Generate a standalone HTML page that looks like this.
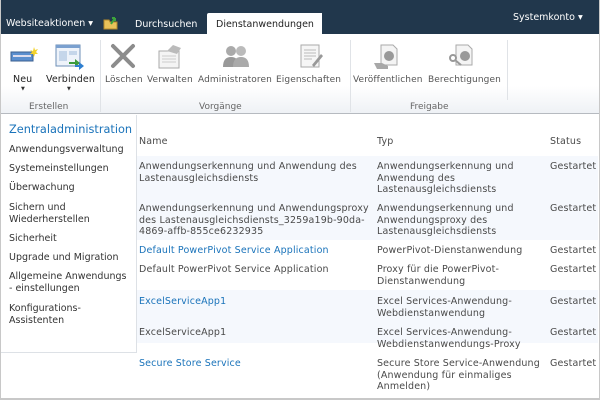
<!DOCTYPE html>
<html><head><meta charset="utf-8"><style>
*{margin:0;padding:0;box-sizing:border-box}
body{width:600px;height:400px;overflow:hidden;background:#fff;font-family:"DejaVu Sans",Verdana,sans-serif;font-size:9.5px;color:#4a4a4a;position:relative}
.a{position:absolute;white-space:nowrap}
.top{position:absolute;left:0;top:0;width:600px;height:34px;background:#21374c}
.w{color:#fff;font-size:9.5px}
.rib{position:absolute;left:0;top:34px;width:600px;height:80px;background:linear-gradient(#fff 0,#fff 52px,#eef1f5 80px);border-bottom:1px solid #b6bac0}
.sep{position:absolute;top:40px;width:1px;height:72px;background:#e0e3e7}
.lbl{font-size:9px;color:#555;letter-spacing:0.1px}
.gl{font-size:9px;color:#666}
.nav{position:absolute;left:0;top:115px;width:137px;height:238px;border-right:1px solid #dde1e6;border-bottom:1px solid #dde1e6;background:#fff}
.ni{position:absolute;left:9px;font-size:9.5px;color:#333;line-height:12px;white-space:nowrap}
.t{position:absolute;line-height:11.5px;white-space:nowrap;letter-spacing:0.15px}
.lk{color:#1a73ba}
.band{position:absolute;left:137px;width:461px;background:#f5f8fd}
</style></head><body>
<div class="top"></div>
<div class="a w" style="left:6px;top:18px">Websiteaktionen ▾</div>
<svg class="a" style="left:103px;top:16px" width="16" height="14"><path d="M1 4h5l1 2h7v7H1z" fill="#e9c25a" stroke="#b58a2a"/><path d="M8 8l4-6M12 2l-3 0M12 2l0 3" stroke="#3ca33c" stroke-width="2"/></svg>
<div class="a w" style="left:135px;top:19px">Durchsuchen</div>
<div class="a" style="left:207px;top:13px;width:115px;height:22px;background:#fff;border-top-left-radius:2px"></div>
<div class="a" style="left:216px;top:19px;color:#222;font-size:9.5px">Dienstanwendungen</div>
<div class="a w" style="left:513px;top:12px">Systemkonto ▾</div>
<div class="rib"></div>
<div class="sep" style="left:100px"></div><div class="sep" style="left:350px"></div><div class="sep" style="left:507px;height:60px"></div>
<svg class="a" style="left:10px;top:46px" width="28" height="18"><rect x="1" y="6" width="22" height="9" fill="#5b8fcf" stroke="#3b5f8f"/><rect x="3" y="9" width="18" height="2" fill="#dde"/><path d="M24 1l1 3 3-1-2 3 2 2-3 0-1 3-1-3-3 0 2-2-2-2 3 1z" fill="#f3d22b"/></svg>
<svg class="a" style="left:55px;top:44px" width="30" height="28"><rect x="1" y="1" width="24" height="21" fill="#eef3fa" stroke="#6d8fb7"/><rect x="1" y="1" width="24" height="3" fill="#7aa0cf"/><rect x="4" y="7" width="8" height="10" fill="#c5d6ea"/><rect x="14" y="7" width="8" height="4" fill="#c5d6ea"/><path d="M14 18h6v-3l5 4-5 4v-3h-6z" fill="#3d9b3d"/><path d="M20 21h4v-3l5 4-5 4v-3h-4z" fill="#2f7fd0"/></svg>
<svg class="a" style="left:110px;top:43px" width="26" height="26"><path d="M3 3L23 23M23 3L3 23" stroke="#8c8c8c" stroke-width="4" stroke-linecap="round"/></svg>
<svg class="a" style="left:157px;top:43px" width="26" height="26"><rect x="2" y="8" width="20" height="17" fill="#f4f4f4" stroke="#aaa"/><path d="M5 13h14M5 16h14M5 19h14" stroke="#ccc"/><path d="M10 8l6-6 8 3-4 6z" fill="#bbb"/></svg>
<svg class="a" style="left:222px;top:43px" width="28" height="26"><circle cx="9" cy="8" r="5" fill="#aaa"/><path d="M1 24q0-10 8-10t8 10z" fill="#999"/><circle cx="19" cy="8" r="5" fill="#bbb"/><path d="M11 24q0-10 8-10t8 10z" fill="#aaa"/></svg>
<svg class="a" style="left:298px;top:43px" width="26" height="26"><rect x="3" y="2" width="18" height="22" fill="#f6f6f6" stroke="#aaa"/><path d="M6 7h12M6 10h12M6 13h12M6 16h8" stroke="#bbb"/><path d="M14 22l9-11 2 2-9 11z" fill="#999"/></svg>
<svg class="a" style="left:373px;top:43px" width="28" height="28"><path d="M8 2h12l4 4v16H8z" fill="#f4f4f4" stroke="#aaa"/><circle cx="16" cy="13" r="5" fill="#999"/><path d="M1 20h8l6 3v3H4z" fill="#a8a8a8"/></svg>
<svg class="a" style="left:448px;top:43px" width="28" height="28"><path d="M8 2h12l4 4v16H8z" fill="#f4f4f4" stroke="#aaa"/><circle cx="17" cy="13" r="5" fill="#999"/><circle cx="5" cy="15" r="3" fill="none" stroke="#999" stroke-width="2"/><path d="M7 17l6 5" stroke="#999" stroke-width="2"/></svg>
<div class="a lbl" style="left:13px;top:74px;color:#222;font-size:9.5px">Neu</div>
<div class="a" style="left:21px;top:86px;font-size:5px;color:#333">▼</div>
<div class="a lbl" style="left:46px;top:74px;color:#222;font-size:9.5px">Verbinden</div>
<div class="a" style="left:67px;top:86px;font-size:5px;color:#333">▼</div>
<div class="a lbl" style="left:105px;top:75px">Löschen</div>
<div class="a lbl" style="left:147px;top:75px">Verwalten</div>
<div class="a lbl" style="left:198px;top:75px">Administratoren</div>
<div class="a lbl" style="left:276px;top:75px">Eigenschaften</div>
<div class="a lbl" style="left:353px;top:75px">Veröffentlichen</div>
<div class="a lbl" style="left:428px;top:75px">Berechtigungen</div>
<div class="a gl" style="left:29px;top:102px">Erstellen</div>
<div class="a gl" style="left:199px;top:102px">Vorgänge</div>
<div class="a gl" style="left:410px;top:102px">Freigabe</div>
<div class="nav"></div>
<div class="a" style="left:9px;top:123px;font-size:11.3px;color:#1a73ba">Zentraladministration</div>
<div class="ni" style="top:144px">Anwendungsverwaltung</div>
<div class="ni" style="top:163px">Systemeinstellungen</div>
<div class="ni" style="top:182px">Überwachung</div>
<div class="ni" style="top:202px">Sichern und<br>Wiederherstellen</div>
<div class="ni" style="top:233px">Sicherheit</div>
<div class="ni" style="top:252px">Upgrade und Migration</div>
<div class="ni" style="top:271px">Allgemeine Anwendungs<br>- einstellungen</div>
<div class="ni" style="top:303px">Konfigurations-<br>Assistenten</div>
<div class="band" style="top:156px;height:84px"></div>
<div class="band" style="top:290px;height:53px"></div>
<div class="t" style="left:139px;top:136px">Name</div>
<div class="t" style="left:377px;top:136px">Typ</div>
<div class="t" style="left:550px;top:136px">Status</div>
<div class="t" style="left:139px;top:161px">Anwendungserkennung und Anwendung des<br>Lastenausgleichsdiensts</div>
<div class="t" style="left:377px;top:161px">Anwendungserkennung und<br>Anwendung des<br>Lastenausgleichsdiensts</div>
<div class="t" style="left:550px;top:161px">Gestartet</div>
<div class="t" style="left:139px;top:203px">Anwendungserkennung und Anwendungsproxy<br>des Lastenausgleichsdiensts_3259a19b-90da-<br>4869-affb-855ce6232935</div>
<div class="t" style="left:377px;top:203px">Anwendungserkennung und<br>Anwendungsproxy des<br>Lastenausgleichsdiensts</div>
<div class="t" style="left:550px;top:203px">Gestartet</div>
<div class="t lk" style="left:139px;top:245px">Default PowerPivot Service Application</div>
<div class="t" style="left:377px;top:245px">PowerPivot-Dienstanwendung</div>
<div class="t" style="left:550px;top:245px">Gestartet</div>
<div class="t" style="left:139px;top:264px">Default PowerPivot Service Application</div>
<div class="t" style="left:377px;top:264px">Proxy für die PowerPivot-<br>Dienstanwendung</div>
<div class="t" style="left:550px;top:264px">Gestartet</div>
<div class="t lk" style="left:139px;top:296px">ExcelServiceApp1</div>
<div class="t" style="left:377px;top:296px">Excel Services-Anwendung-<br>Webdienstanwendung</div>
<div class="t" style="left:550px;top:296px">Gestartet</div>
<div class="t" style="left:139px;top:327px">ExcelServiceApp1</div>
<div class="t" style="left:377px;top:327px">Excel Services-Anwendung-<br>Webdienstanwendungs-Proxy</div>
<div class="t" style="left:550px;top:327px">Gestartet</div>
<div class="t lk" style="left:139px;top:358px">Secure Store Service</div>
<div class="t" style="left:377px;top:358px">Secure Store Service-Anwendung<br>(Anwendung für einmaliges<br>Anmelden)</div>
<div class="t" style="left:550px;top:358px">Gestartet</div>
<div class="a" style="left:0;top:0;width:600px;height:400px;border:1px solid #c8c8c8;border-bottom-width:2px;border-top:none"></div>
</body></html>
